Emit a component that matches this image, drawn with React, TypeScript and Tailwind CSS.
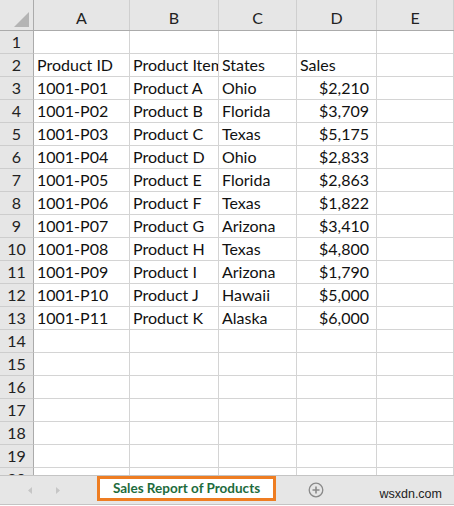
const columns = [
  { letter: "A", width: "w-[96px]" },
  { letter: "B", width: "w-[89px]" },
  { letter: "C", width: "w-[78px]" },
  { letter: "D", width: "w-[80px]" },
  { letter: "E", width: "w-[77px]" },
]

const data: string[][] = [
  [],
  ["Product ID", "Product Item", "States", "Sales"],
  ["1001-P01", "Product A", "Ohio", "$2,210"],
  ["1001-P02", "Product B", "Florida", "$3,709"],
  ["1001-P03", "Product C", "Texas", "$5,175"],
  ["1001-P04", "Product D", "Ohio", "$2,833"],
  ["1001-P05", "Product E", "Florida", "$2,863"],
  ["1001-P06", "Product F", "Texas", "$1,822"],
  ["1001-P07", "Product G", "Arizona", "$3,410"],
  ["1001-P08", "Product H", "Texas", "$4,800"],
  ["1001-P09", "Product I", "Arizona", "$1,790"],
  ["1001-P10", "Product J", "Hawaii", "$5,000"],
  ["1001-P11", "Product K", "Alaska", "$6,000"],
]

function Row({ n, cells }: { n: number; cells: string[] }) {
  return (
    <div className="flex h-[23px] shrink-0">
      <div className="w-[34px] shrink-0 flex items-center justify-center pb-[1px] bg-[#e6e6e6] border-r border-r-[#ababab] border-b border-b-[#cdcdcd] text-[#222]">
        {n}
      </div>
      {columns.map((col, i) => {
        const value = cells[i] ?? ""
        const isMoney = value.startsWith("$")
        return (
          <div
            key={col.letter}
            className={`${col.width} shrink-0 flex items-end overflow-hidden whitespace-nowrap border-r border-b border-[#d4d4d4] leading-[16px] pb-[3px] ${
              isMoney ? "justify-end pr-[7px]" : "pl-[3px]"
            }`}
          >
            {value}
          </div>
        )
      })}
    </div>
  )
}

export default function App() {
  const rows = Array.from({ length: 20 }, (_, i) => i + 1)

  return (
    <div className="w-[454px] h-[506px] bg-white flex flex-col overflow-hidden text-[16px] text-[#111] font-['Lato',sans-serif]">
      <div className="h-[475px] flex flex-col overflow-hidden">
        <div className="flex h-[31px] shrink-0 bg-[#e6e6e6] border-b border-[#ababab]">
          <div className="w-[34px] shrink-0 border-r border-[#ababab] flex items-end justify-end pr-[4px] pb-[3px]">
            <svg width="15" height="15" viewBox="0 0 15 15">
              <polygon points="15,0 15,15 0,15" fill="#b4b4b4" />
            </svg>
          </div>
          {columns.map((col) => (
            <div
              key={col.letter}
              className={`${col.width} shrink-0 flex items-center justify-center pt-[5px] border-r border-[#cfcfcf] text-[#222]`}
            >
              {col.letter}
            </div>
          ))}
        </div>
        {rows.map((n) => (
          <Row key={n} n={n} cells={data[n - 1] ?? []} />
        ))}
      </div>

      <div className="h-[30px] shrink-0 flex items-start bg-[#e6e6e6] border-t border-b border-[#c4c4c4]">
        <div className="w-[97px] h-full shrink-0 flex items-center">
          <svg className="ml-[28px]" width="4" height="7" viewBox="0 0 4 7">
            <polygon points="4,0 4,7 0,3.5" fill="#c6c6c6" />
          </svg>
          <svg className="ml-[24px]" width="4" height="7" viewBox="0 0 4 7">
            <polygon points="0,0 0,7 4,3.5" fill="#c6c6c6" />
          </svg>
        </div>
        <div className="w-[179px] h-[25px] shrink-0 flex items-center justify-center bg-white border-[3px] border-[#ee7d22] text-[13.5px] font-bold text-[#1e6b3c]">
          Sales Report of Products
        </div>
        <div className="h-full flex items-center ml-[32px]">
          <svg width="16" height="16" viewBox="0 0 16 16">
            <circle cx="8" cy="8" r="6.8" fill="none" stroke="#8a8a8a" strokeWidth="1.3" />
            <path d="M8 4.5v7M4.5 8h7" stroke="#8a8a8a" strokeWidth="1.6" />
          </svg>
        </div>
        <div className="ml-auto mr-[12px] h-full flex items-center pt-[8px] text-[12.5px] text-[#222] font-['Liberation_Sans',sans-serif]">
          wsxdn.com
        </div>
      </div>
    </div>
  )
}
